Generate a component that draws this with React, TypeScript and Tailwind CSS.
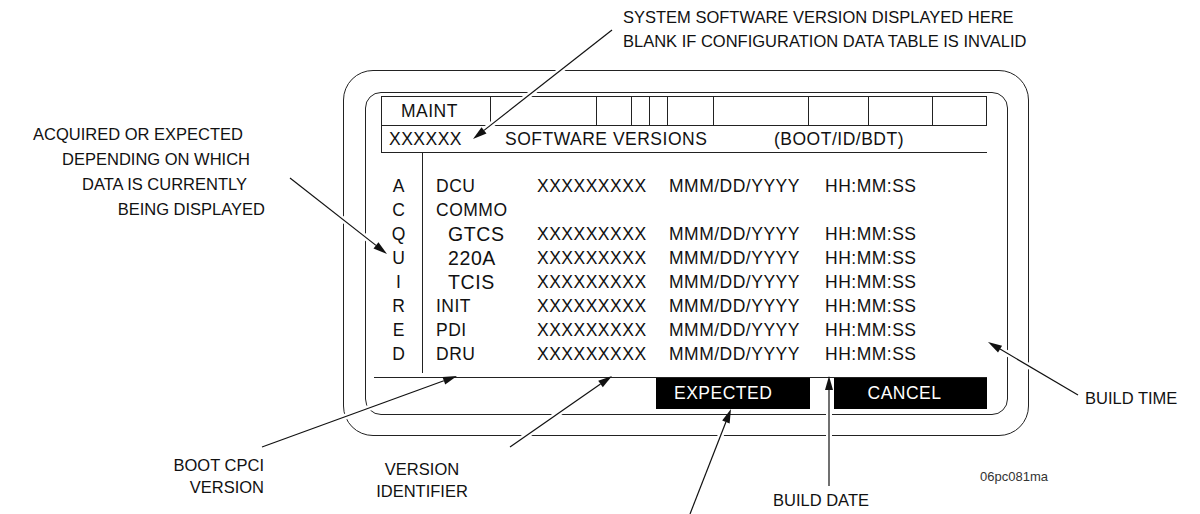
import React from 'react';

type Row = { l: string; name: string; sub?: boolean; v?: string; d?: string; t?: string };

const rows: Row[] = [
  { l: 'A', name: 'DCU', v: 'XXXXXXXXX', d: 'MMM/DD/YYYY', t: 'HH:MM:SS' },
  { l: 'C', name: 'COMMO' },
  { l: 'Q', name: 'GTCS', sub: true, v: 'XXXXXXXXX', d: 'MMM/DD/YYYY', t: 'HH:MM:SS' },
  { l: 'U', name: '220A', sub: true, v: 'XXXXXXXXX', d: 'MMM/DD/YYYY', t: 'HH:MM:SS' },
  { l: 'I', name: 'TCIS', sub: true, v: 'XXXXXXXXX', d: 'MMM/DD/YYYY', t: 'HH:MM:SS' },
  { l: 'R', name: 'INIT', v: 'XXXXXXXXX', d: 'MMM/DD/YYYY', t: 'HH:MM:SS' },
  { l: 'E', name: 'PDI', v: 'XXXXXXXXX', d: 'MMM/DD/YYYY', t: 'HH:MM:SS' },
  { l: 'D', name: 'DRU', v: 'XXXXXXXXX', d: 'MMM/DD/YYYY', t: 'HH:MM:SS' },
];

// header cell widths, left to right
const cells = [108, 106, 35, 18, 18, 46, 95, 60, 64];

// callout leaders: [x1, y1, tipX, tipY]
const arrows: [number, number, number, number][] = [
  [612, 30, 473, 139],
  [290, 178, 387, 254],
  [262, 447, 457, 376],
  [510, 447, 612, 376],
  [690, 514, 731, 409],
  [829, 486, 829, 376],
  [1078, 395, 988, 342],
];

function Leader({ a }: { a: [number, number, number, number] }) {
  const [x1, y1, x2, y2] = a;
  const len = Math.hypot(x2 - x1, y2 - y1);
  const ux = (x2 - x1) / len;
  const uy = (y2 - y1) / len;
  const bx = x2 - ux * 14;
  const by = y2 - uy * 14;
  const pts = `${x2},${y2} ${bx - uy * 4},${by + ux * 4} ${bx + uy * 4},${by - ux * 4}`;
  return (
    <g>
      <line x1={x1} y1={y1} x2={bx} y2={by} stroke="white" strokeWidth={6} />
      <line x1={x1} y1={y1} x2={bx} y2={by} stroke="#111" strokeWidth={1.2} />
      <polygon points={pts} fill="#111" />
    </g>
  );
}

export default function App() {
  return (
    <div className="relative w-[1200px] h-[514px] overflow-hidden bg-white pt-[70px] pl-[343px] font-['Liberation_Sans',Arial,Helvetica,sans-serif] text-[#111]">
      {/* display bezel */}
      <div className="w-[686px] h-[366px] rounded-[30px] border-[1.5px] border-[#222] pl-[20.5px] pt-[20.5px]">
        <div className="w-[643px] h-[323px] rounded-[16px] border-[1.5px] border-[#222] text-[17.5px] tracking-[0.5px]">
          {/* title block */}
          <div className="ml-[15.5px] mt-[3.5px] w-[606px]">
            <div className="flex h-[30px] border border-[#222]">
              {cells.map((w, i) => (
                <div
                  key={i}
                  style={{ width: w }}
                  className={i === 0 ? 'flex items-center pl-[19px]' : 'border-l border-[#222]'}
                >
                  {i === 0 ? 'MAINT' : null}
                </div>
              ))}
              <div className="flex-1 border-l border-[#222]" />
            </div>
            <div className="flex h-[27px] items-center border-l border-b border-[#222] pt-[2px] leading-none">
              <span className="pl-[7px] w-[123px]">XXXXXX</span>
              <span className="w-[269px]">SOFTWARE VERSIONS</span>
              <span>(BOOT/ID/BDT)</span>
            </div>
          </div>

          {/* version list */}
          <div className="ml-[15.5px] flex h-[220px]">
            <div className="w-[42px] border-r border-[#222] pt-[21px] pr-[8px] text-center">
              {rows.map((r) => (
                <div key={r.l} className="h-[24px] leading-[24px] tracking-normal pl-[2px]">
                  {r.l}
                </div>
              ))}
            </div>
            <div className="pt-[21px]">
              {rows.map((r) => (
                <div key={r.name} className="flex h-[24px] items-center leading-[24px]">
                  <span
                    className={
                      r.sub
                        ? 'w-[114px] pl-[25px] text-[19.5px] tracking-[0.6px]'
                        : 'w-[114px] pl-[13px]'
                    }
                  >
                    {r.name}
                  </span>
                  <span className="w-[132px]">{r.v}</span>
                  <span className="w-[156px]">{r.d}</span>
                  <span>{r.t}</span>
                </div>
              ))}
            </div>
          </div>

          {/* soft keys */}
          <div className="ml-[8.5px] mt-[4px] w-[613px] border-t border-[#222] flex justify-end gap-[24px]">
            <div className="h-[31px] w-[154px] bg-black text-white flex items-center pl-[18px]">EXPECTED</div>
            <div className="h-[31px] w-[153px] bg-black text-white flex items-center justify-center pr-[12px]">CANCEL</div>
          </div>
        </div>
      </div>

      {/* leader lines */}
      <svg className="absolute left-0 top-0" width={1200} height={514}>
        {arrows.map((a, i) => (
          <Leader key={i} a={a} />
        ))}
      </svg>

      {/* callout text */}
      <div className="absolute left-[623px] top-[5px] text-[16.5px] leading-[24px]">
        <div>SYSTEM SOFTWARE VERSION DISPLAYED HERE</div>
        <div>BLANK IF CONFIGURATION DATA TABLE IS INVALID</div>
      </div>
      <div className="absolute right-[935px] top-[122px] text-[16.5px] leading-[25px] text-right">
        <div className="pr-[22px]">ACQUIRED OR EXPECTED</div>
        <div className="pr-[15px]">DEPENDING ON WHICH</div>
        <div className="pr-[18px]">DATA IS CURRENTLY</div>
        <div>BEING DISPLAYED</div>
      </div>
      <div className="absolute right-[936px] top-[454px] text-[16.5px] leading-[22px] text-right">
        <div>BOOT CPCI</div>
        <div>VERSION</div>
      </div>
      <div className="absolute left-[372px] w-[100px] top-[458px] text-[16.5px] leading-[22px] text-center">
        <div>VERSION</div>
        <div>IDENTIFIER</div>
      </div>
      <div className="absolute left-[773px] top-[488px] text-[16.5px] leading-[24px]">BUILD DATE</div>
      <div className="absolute left-[1085px] top-[386px] text-[16.5px] leading-[24px]">BUILD TIME</div>
      <div className="absolute left-[980px] top-[468px] text-[13px] leading-[18px] text-[#333]">06pc081ma</div>
    </div>
  );
}
